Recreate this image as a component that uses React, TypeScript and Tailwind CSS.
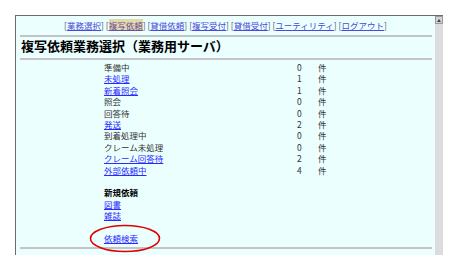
import React from 'react';

const navItems = ['業務選択', '複写依頼', '貸借依頼', '複写受付', '貸借受付', 'ユーティリティ', 'ログアウト'];

const rows: { label: string; count: number; link: boolean }[] = [
  { label: '準備中', count: 0, link: false },
  { label: '未処理', count: 1, link: true },
  { label: '新着照会', count: 1, link: true },
  { label: '照会', count: 0, link: false },
  { label: '回答待', count: 0, link: false },
  { label: '発送', count: 2, link: true },
  { label: '到着処理中', count: 0, link: false },
  { label: 'クレーム未処理', count: 0, link: false },
  { label: 'クレーム回答待', count: 2, link: true },
  { label: '外部依頼中', count: 4, link: true },
];

const font = { fontFamily: '"MS PGothic", "Noto Sans CJK JP", sans-serif' };

export default function App() {
  return (
    <div className="w-[458px] h-[269px] bg-white pt-[15px] pl-[15px] overflow-hidden" style={font}>
      <div className="w-[428px] h-[240px] border-l border-t border-[#6b6b6b] flex">
        <div className="flex-1 bg-[#ecffff] flex flex-col">
          <div className="mt-[4px] h-[10px] text-center text-[8.5px] leading-[10px] text-[#555577] whitespace-nowrap">
            {navItems.map((n, i) => (
              <span key={n}>
                {i > 0 && ' '}[
                <span
                  className={
                    n === '複写依頼'
                      ? 'bg-[#e6d9a8] text-[#6a4fa0] underline'
                      : 'text-[#4a4ad8] underline'
                  }
                >
                  {n}
                </span>
                ]
              </span>
            ))}
          </div>
          <div className="mt-[5px] ml-[4px] mr-[3px] h-[2px] bg-[#c4c4c4]" />
          <div className="mt-[1px] ml-[5px] h-[16px] text-[13px] leading-[16px] font-bold text-black whitespace-nowrap">
            複写依頼業務選択（業務用サーバ）
          </div>
          <div className="mt-[4px] ml-[4px] mr-[3px] h-[2px] bg-[#c4c4c4]" />
          <div className="mt-[2px] ml-[88px] text-[8.5px] leading-[11.4px] text-[#333]">
            {rows.map((r) => (
              <div key={r.label} className="flex h-[11.4px]">
                <div className="w-[193px] shrink-0">
                  {r.link ? <span className="text-[#2a2aff] underline">{r.label}</span> : r.label}
                </div>
                <div className="w-[21px] shrink-0">{r.count}</div>
                <div>件</div>
              </div>
            ))}
            <div className="h-[11.4px]" />
            <div className="h-[11.4px] font-bold text-black">新規依頼</div>
            <div className="h-[11.4px]">
              <span className="text-[#2a2aff] underline">図書</span>
            </div>
            <div className="h-[11.4px]">
              <span className="text-[#2a2aff] underline">雑誌</span>
            </div>
            <div className="h-[11.4px]" />
            <div className="h-[11.4px]">
              <span className="relative text-[#2a2aff] underline">
                依頼検索
                <svg className="absolute left-[-15px] top-[-8px]" width="72" height="29" viewBox="0 0 72 29">
                  <ellipse cx="36" cy="14.5" rx="34.5" ry="13" fill="none" stroke="#e00000" strokeWidth="1.6" />
                </svg>
              </span>
            </div>
          </div>
          <div className="mt-[3px] ml-[4px] mr-[3px] h-[2px] bg-[#c4c4c4]" />
        </div>
        <div className="w-[8px] bg-[#dcdcdc] flex flex-col">
          <div className="h-[8px] bg-[#d4d4d4] border border-[#9a9a9a] flex items-center justify-center">
            <svg width="4" height="3" viewBox="0 0 4 3">
              <path d="M0 3 L2 0 L4 3 Z" fill="#444" />
            </svg>
          </div>
        </div>
      </div>
    </div>
  );
}
